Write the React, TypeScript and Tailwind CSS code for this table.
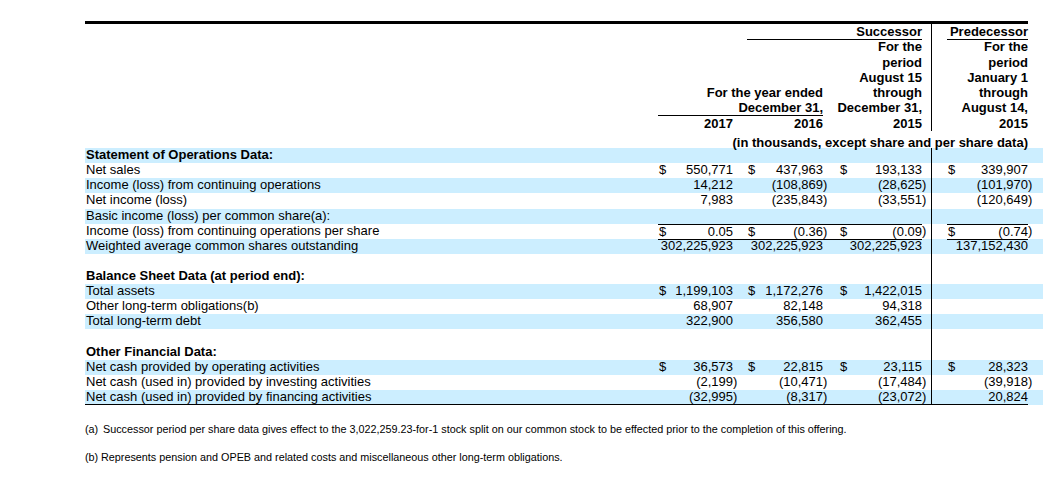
import React from 'react';

// grid: label | c1$ c1v c1p | c2$ c2v c2p | c3$ c3v c3p | divider | gap | c4$ c4v c4p
const cols =
  'grid w-[958px] grid-cols-[573px_12px_63px_14px_12px_64px_16px_12px_71px_9px_1px_15px_12px_69px_15px]';

type Cell = [string, string] | null;

interface Row {
  label: string;
  head?: boolean;
  blue?: boolean;
  vals?: Cell[];
  ruled?: boolean;
  last?: boolean;
}

const rows: Row[] = [
  { label: 'Statement of Operations Data:', head: true, blue: true },
  { label: 'Net sales', vals: [['$', '550,771'], ['$', '437,963'], ['$', '193,133'], ['$', '339,907']] },
  { label: 'Income (loss) from continuing operations', blue: true, vals: [['', '14,212'], ['', '(108,869)'], ['', '(28,625)'], ['', '(101,970)']] },
  { label: 'Net income (loss)', vals: [['', '7,983'], ['', '(235,843)'], ['', '(33,551)'], ['', '(120,649)']] },
  { label: 'Basic income (loss) per common share(a):', blue: true },
  { label: 'Income (loss) from continuing operations per share', ruled: true, vals: [['$', '0.05'], ['$', '(0.36)'], ['$', '(0.09)'], ['$', '(0.74)']] },
  { label: 'Weighted average common shares outstanding', blue: true, vals: [['', '302,225,923'], ['', '302,225,923'], ['', '302,225,923'], ['', '137,152,430']] },
  { label: '' },
  { label: 'Balance Sheet Data (at period end):', head: true },
  { label: 'Total assets', blue: true, vals: [['$', '1,199,103'], ['$', '1,172,276'], ['$', '1,422,015'], null] },
  { label: 'Other long-term obligations(b)', vals: [['', '68,907'], ['', '82,148'], ['', '94,318'], null] },
  { label: 'Total long-term debt', blue: true, vals: [['', '322,900'], ['', '356,580'], ['', '362,455'], null] },
  { label: '' },
  { label: 'Other Financial Data:', head: true },
  { label: 'Net cash provided by operating activities', blue: true, vals: [['$', '36,573'], ['$', '22,815'], ['$', '23,115'], ['$', '28,323']] },
  { label: 'Net cash (used in) provided by investing activities', vals: [['', '(2,199)'], ['', '(10,471)'], ['', '(17,484)'], ['', '(39,918)']] },
  { label: 'Net cash (used in) provided by financing activities', blue: true, last: true, vals: [['', '(32,995)'], ['', '(8,317)'], ['', '(23,072)'], ['', '20,824']] },
];

function DataRow({ row }: { row: Row }) {
  const bg = row.blue ? 'bg-[#cceeff]' : '';
  const rule = row.ruled ? 'border-y border-black' : '';
  const end = row.last ? 'border-b border-black' : '';
  const cells: React.ReactNode[] = [];

  const vals = row.vals ?? [null, null, null, null];
  vals.forEach((v, i) => {
    const neg = v ? v[1].endsWith(')') : false;
    const num = v ? (neg ? v[1].slice(0, -1) : v[1]) : '';
    if (i === 3) {
      cells.push(<div key="div" className="bg-black" />);
      cells.push(<div key="gap" className={end} />);
    }
    cells.push(
      <div key={`d${i}`} className={`pl-px ${i < 3 || v ? rule : ''} ${end}`}>
        {v ? v[0] : ''}
      </div>
    );
    cells.push(
      <div key={`v${i}`} className={`flex justify-end whitespace-nowrap ${rule} ${end}`}>
        {num}
      </div>
    );
    cells.push(
      <div key={`p${i}`} className={`${i < 2 ? rule : ''} ${i < 3 ? end : ''}`}>
        {neg ? ')' : ''}
      </div>
    );
  });

  return (
    <div className={`${cols} h-[15.12px] leading-[14px] ${bg}`}>
      <div className={`whitespace-nowrap pl-px ${row.head ? 'font-bold' : ''} ${end}`}>{row.label}</div>
      {cells}
    </div>
  );
}

function HeadLine({ children }: { children: React.ReactNode }) {
  return (
    <div className={`${cols} h-[15.3px] leading-[15px] font-bold`}>
      {children}
      <div className="col-start-11 row-start-1 bg-black" />
    </div>
  );
}

export default function App() {
  return (
    <div
      className="min-h-[487px] bg-white pl-[85px] pt-[21px] text-[13px] text-black"
      style={{ fontFamily: '"Liberation Sans", Arial, sans-serif' }}
    >
      <div className="h-[3px] w-[943px] bg-black" />

      <HeadLine>
        <div className="col-start-5 col-end-10 border-b border-black text-right">Successor</div>
        <div className="col-start-13 col-end-15 border-b border-black text-right">Predecessor</div>
      </HeadLine>
      <HeadLine>
        <div className="col-start-8 col-end-10 text-right">For the</div>
        <div className="col-start-13 col-end-15 text-right">For the</div>
      </HeadLine>
      <HeadLine>
        <div className="col-start-8 col-end-10 text-right">period</div>
        <div className="col-start-13 col-end-15 text-right">period</div>
      </HeadLine>
      <HeadLine>
        <div className="col-start-8 col-end-10 text-right">August 15</div>
        <div className="col-start-13 col-end-15 text-right">January 1</div>
      </HeadLine>
      <HeadLine>
        <div className="col-start-2 col-end-7 text-right">For the year ended</div>
        <div className="col-start-8 col-end-10 text-right">through</div>
        <div className="col-start-13 col-end-15 text-right">through</div>
      </HeadLine>
      <HeadLine>
        <div className="col-start-2 col-end-7 border-b border-black text-right">December 31,</div>
        <div className="col-start-7 col-end-10 whitespace-nowrap text-right">December 31,</div>
        <div className="col-start-13 col-end-15 text-right">August 14,</div>
      </HeadLine>
      <HeadLine>
        <div className="col-start-2 col-end-4 text-right">2017</div>
        <div className="col-start-5 col-end-7 text-right">2016</div>
        <div className="col-start-8 col-end-10 text-right">2015</div>
        <div className="col-start-13 col-end-15 text-right">2015</div>
      </HeadLine>

      <div className={`${cols} mt-[2px] h-[15px] leading-[19px] font-bold`}>
        <div className="col-start-2 col-end-15 whitespace-nowrap text-right">
          (in thousands, except share and per share data)
        </div>
      </div>

      <div>
        {rows.map((r, i) => (
          <DataRow key={i} row={r} />
        ))}
      </div>

      <div className="mt-[18px] flex text-[10.8px] leading-[12px]">
        <span className="w-[18px]">(a)</span>
        <span>
          Successor period per share data gives effect to the 3,022,259.23-for-1 stock split on our common stock to be
          effected prior to the completion of this offering.
        </span>
      </div>
      <div className="mt-[16px] flex text-[10.8px] leading-[12px]">
        <span className="w-[16px]">(b)</span>
        <span>Represents pension and OPEB and related costs and miscellaneous other long-term obligations.</span>
      </div>
    </div>
  );
}
